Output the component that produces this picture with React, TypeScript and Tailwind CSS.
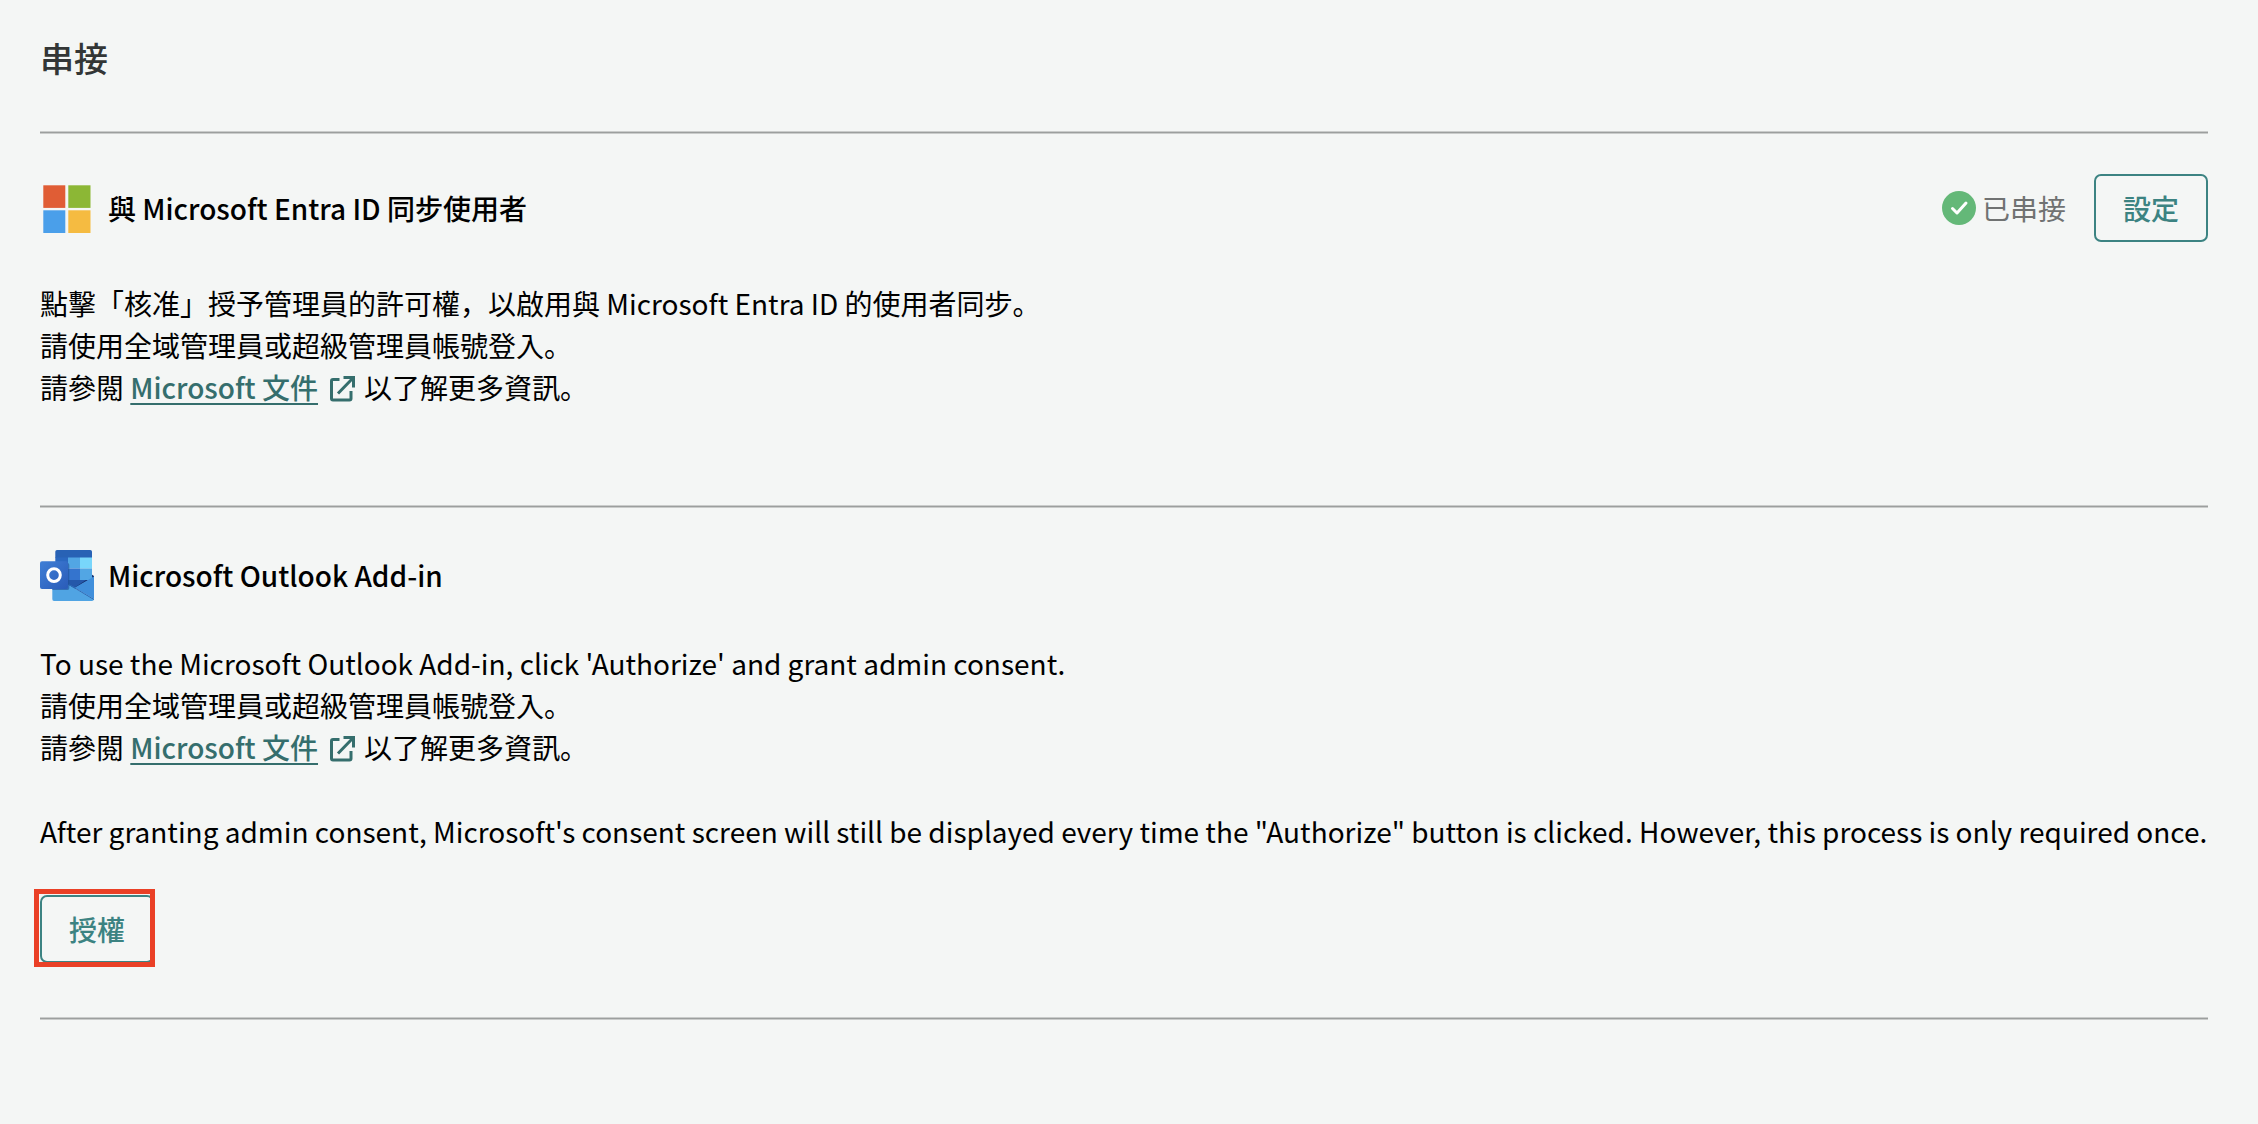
import type { ReactNode } from 'react';

const MicrosoftIcon = () => (
  <svg viewBox="0 0 54 54" className="size-[54px] shrink-0" aria-hidden="true">
    <rect x="3.3" y="4.3" width="22" height="22.6" fill="#e05d35" />
    <rect x="28.3" y="4.3" width="22.2" height="22.6" fill="#8cb735" />
    <rect x="3.3" y="29.3" width="22" height="22.7" fill="#4a9fea" />
    <rect x="28.3" y="29.3" width="22.2" height="22.7" fill="#f5bb41" />
  </svg>
);

const OutlookIcon = () => (
  <svg viewBox="0 0 54 54" className="size-[54px] shrink-0" aria-hidden="true">
    <defs>
      <linearGradient id="badge" x1="0" y1="0" x2="1" y2="1">
        <stop offset="0" stopColor="#3f7fd6" />
        <stop offset="1" stopColor="#2a5bb8" />
      </linearGradient>
    </defs>
    <path d="M51 26L54 28V29L34 41L15 29Z" fill="#16306f" />
    <path d="M17 2H50.3Q52 2 52 3.7V10H15.3V3.7Q15.3 2 17 2Z" fill="#2862b5" />
    <path d="M15.3 9.5H28V22H15.3Z" fill="#2b68c0" />
    <path d="M28 9.5H40V20.5H28Z" fill="#52a6e4" />
    <path d="M40 9.5H52V20.5H40Z" fill="#78d6fb" />
    <path d="M28 20.5H40V32H28Z" fill="#3474ce" />
    <path d="M40 20.5H52V32H40Z" fill="#52a6e4" />
    <path d="M15.3 32H46L34 40L28 37Z" fill="#2558aa" />
    <path d="M54 28.5V51L28 36L35 39.5Z" fill="#408fdb" />
    <path d="M12.3 28L54 51Q53.6 53 52 53H14Q12.3 53 12.3 51Z" fill="#50a4e3" />
    <path d="M28 36L54 51.5" stroke="#2c69b5" strokeWidth="1" />
    <path d="M12.3 42V15H27.5Q29.3 15 29.3 17V40Q29.3 42 27.5 42Z" fill="#1e4f96" opacity="0.6" />
    <rect x="0" y="13.3" width="28" height="27.8" rx="2" fill="url(#badge)" />
    <ellipse cx="14" cy="27.1" rx="6.3" ry="6.4" fill="none" stroke="#fff" strokeWidth="3" />
  </svg>
);

const CheckIcon = () => (
  <svg viewBox="0 0 34 34" className="size-[34px] mr-1.5" fill="none" aria-hidden="true">
    <circle cx="17" cy="17" r="17" fill="#64b878" />
    <path d="M10.5 17.5L15 22L24 12" stroke="#fff" strokeWidth="3" strokeLinecap="round" strokeLinejoin="round" />
  </svg>
);

const ExternalIcon = () => (
  <svg
    viewBox="0 0 28 28"
    className="inline size-7 ml-2.5 mr-2 align-[-4px]"
    fill="none"
    stroke="#356e6d"
    strokeWidth="3"
    aria-hidden="true"
  >
    <path d="M11.5 4.5H5Q3.5 4.5 3.5 6V23.5Q3.5 25 5 25H21.5Q23 25 23 23.5V16" />
    <path d="M15.5 2.5H25.5V12.5M25 3L10 18.5" />
  </svg>
);

const Divider = () => <hr className="h-[3px] border-y border-[#cacccb] bg-[#9c9f9e]" />;

const OutlineButton = ({ children }: { children: ReactNode }) => (
  <button
    type="button"
    className="block w-[114px] h-[68px] rounded-[7px] border-2 border-[#3c8382] font-medium text-[#3c8382]"
  >
    {children}
  </button>
);

const DocsLine = () => (
  <p>
    請參閱{' '}
    <a
      href="#docs"
      className="font-medium text-[#356e6d] underline decoration-2 underline-offset-4"
    >
      Microsoft 文件
    </a>
    <ExternalIcon />
    以了解更多資訊。
  </p>
);

const Title = ({ icon, children }: { icon: ReactNode; children: ReactNode }) => (
  <div className="flex items-center gap-3.5">
    {icon}
    <h2 className="font-medium">{children}</h2>
  </div>
);

export default function App() {
  return (
    <main className="min-h-screen bg-[#f4f6f5] pl-10 pr-[50px] pt-[31px] text-[28px] leading-[42px] text-black font-['Noto_Sans_CJK_JP','Noto_Sans_CJK_TC',sans-serif]">
      <h1 className="pb-[46px] text-[34px] leading-[54px] font-medium text-[#333636]">串接</h1>
      <Divider />

      {/* Entra ID */}
      <section className="pt-10 pb-[97px]">
        <div className="flex items-center justify-between">
          <Title icon={<MicrosoftIcon />}>與 Microsoft Entra ID 同步使用者</Title>
          <div className="flex items-center">
            <CheckIcon />
            <span className="mr-7 text-[#707272]">已串接</span>
            <OutlineButton>設定</OutlineButton>
          </div>
        </div>
        <div className="pt-10">
          <p>點擊「核准」授予管理員的許可權，以啟用與 Microsoft Entra ID 的使用者同步。</p>
          <p>請使用全域管理員或超級管理員帳號登入。</p>
          <DocsLine />
        </div>
      </section>
      <Divider />

      {/* Outlook */}
      <section className="pt-10 pb-[54px]">
        <Title icon={<OutlookIcon />}>Microsoft Outlook Add-in</Title>
        <div className="pt-10">
          <p>To use the Microsoft Outlook Add-in, click 'Authorize' and grant admin consent.</p>
          <p>請使用全域管理員或超級管理員帳號登入。</p>
          <DocsLine />
        </div>
        <p className="pt-[42px] pb-[43px]">
          After granting admin consent, Microsoft's consent screen will still be displayed every time
          the "Authorize" button is clicked. However, this process is only required once.
        </p>
        <div className="relative w-fit">
          <OutlineButton>授權</OutlineButton>
          {/* highlight frame */}
          <div className="pointer-events-none absolute -left-1.5 -right-px -top-1.5 -bottom-1 border-5 border-[#ea4026]" />
        </div>
      </section>
      <Divider />
    </main>
  );
}
